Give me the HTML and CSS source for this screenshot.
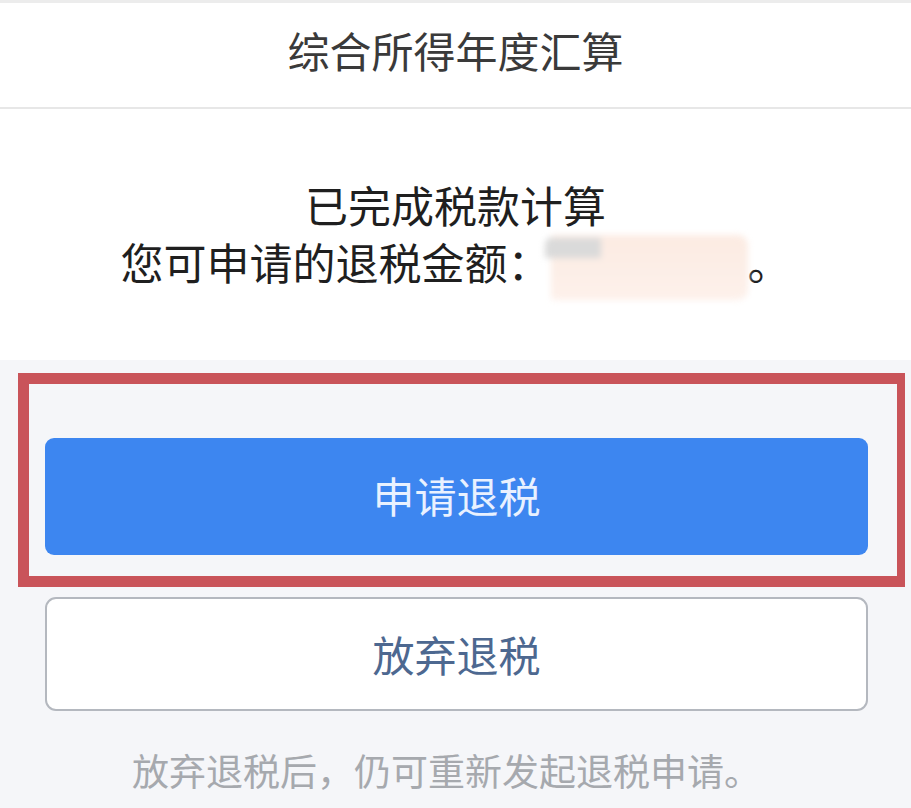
FILE: index.html
```html
<!DOCTYPE html>
<html lang="zh-CN">
<head>
<meta charset="utf-8">
<title>综合所得年度汇算</title>
<link rel="stylesheet" href="styles.css">
</head>
<body>
<header class="topbar">
  <h1 class="topbar-title">综合所得年度汇算</h1>
</header>
<section class="result">
  <p class="result-line">已完成税款计算</p>
  <div class="result-amount">
    <span class="result-label">您可申请的退税金额：</span>
    <span class="mask" aria-hidden="true"></span>
    <span class="result-label">。</span>
  </div>
</section>
<main class="actions">
  <div class="highlight">
    <button class="btn btn-primary" type="button">申请退税</button>
  </div>
  <button class="btn btn-secondary" type="button">放弃退税</button>
  <p class="note">放弃退税后，仍可重新发起退税申请。</p>
</main>
</body>
</html>
```
FILE: styles.css
```css
* { box-sizing: border-box; }
html, body {
  margin: 0;
  padding: 0;
}
body {
  background: #f5f6f9;
  font-family: "Noto Sans CJK SC", "Noto Sans", sans-serif;
  height: 808px;
  overflow: hidden;
}
.topbar {
  background: #ffffff;
  height: 109px;
  border-top: 3px solid #ececec;
  border-bottom: 2px solid #e7e7e7;
  display: flex;
  align-items: center;
  justify-content: center;
  padding-bottom: 10px;
}
.topbar-title {
  margin: 0;
  font-size: 42px;
  font-weight: 400;
  color: #3a3a3a;
  line-height: 50px;
}
.result {
  background: #ffffff;
  height: 251px;
  padding-top: 67px;
}
.result-line {
  margin: 0;
  text-align: center;
  font-size: 43px;
  line-height: 57px;
  color: #1f1f1f;
}
.result-amount {
  display: flex;
  justify-content: center;
  align-items: flex-start;
  height: 57px;
}
.result-label {
  font-size: 43px;
  line-height: 57px;
  color: #1f1f1f;
  white-space: nowrap;
}
.mask {
  display: block;
  width: 203px;
  height: 65px;
  margin-top: 2px;
  margin-left: -6px;
  background:
    linear-gradient(#dadada, #dadada) 0 3px / 56px 20px no-repeat,
    linear-gradient(#fcebe2, #fdf1eb) 6px 0 / 197px 65px no-repeat;
  border-radius: 10px;
  filter: blur(3px);
}
.actions {
  padding-top: 13px;
}
.highlight {
  margin: 0 6px 0 18px;
  border: 11px solid #c9545a;
  border-right-width: 8px;
  padding: 54px 29px 21px 16px;
}
.btn {
  display: flex;
  align-items: center;
  justify-content: center;
  width: 823px;
  font-family: inherit;
  font-size: 42px;
  line-height: 50px;
  cursor: pointer;
}
.btn-primary {
  height: 117px;
  border: none;
  border-radius: 9px;
  background: #3d86f0;
  color: #e9f1ff;
  padding-bottom: 4px;
}
.btn-secondary {
  height: 114px;
  margin: 10px 0 0 45px;
  border: 2px solid #b4b8bf;
  border-radius: 11px;
  background: #ffffff;
  color: #4d6890;
}
.note {
  margin: 34px 0 0;
  padding-right: 18px;
  text-align: center;
  font-size: 37px;
  line-height: 50px;
  color: #a6a9ae;
}
```
